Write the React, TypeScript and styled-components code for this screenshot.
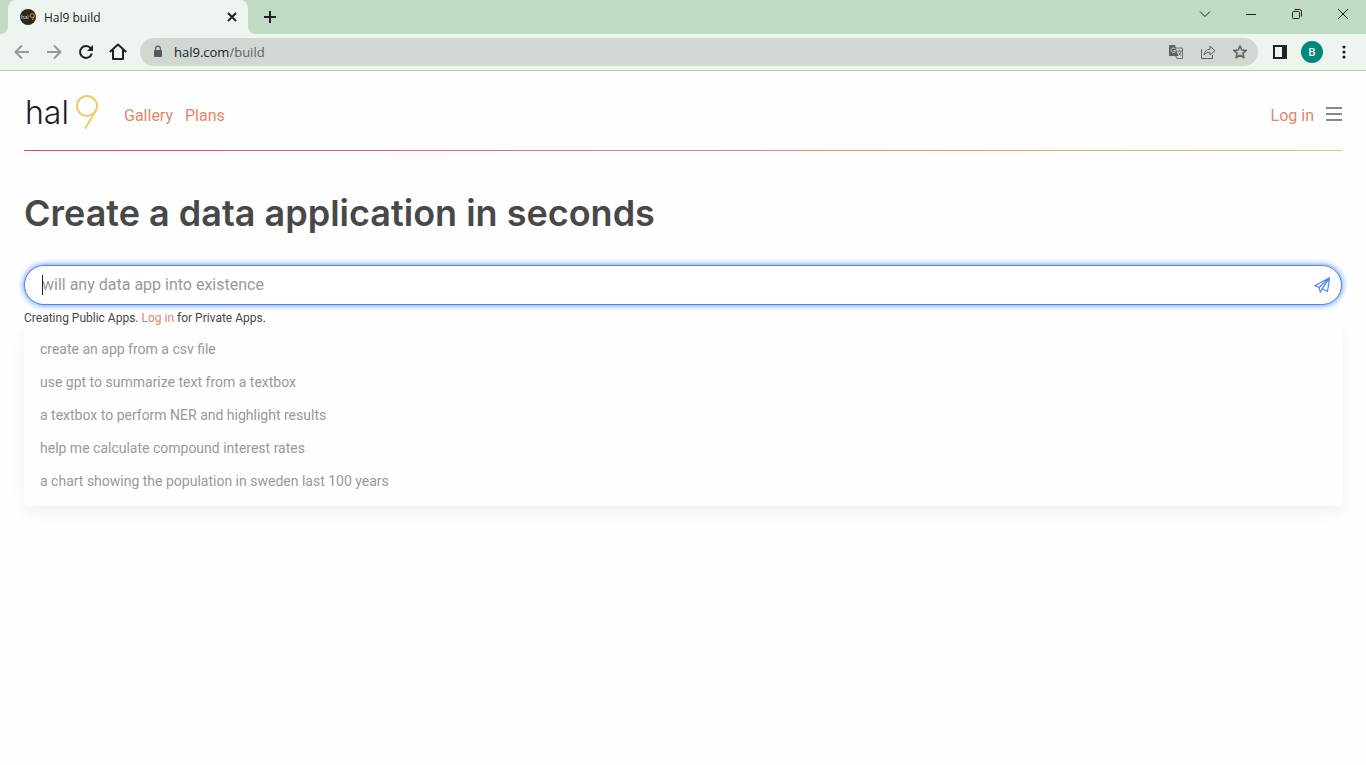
import React from "react";
import styled, { createGlobalStyle } from "styled-components";

const GlobalStyle = createGlobalStyle`
  *, *::before, *::after { box-sizing: border-box; }
  body { margin: 0; background: #fefefe; font-family: Roboto, "Liberation Sans", sans-serif; color: #484848; }
  button { margin: 0; padding: 0; border: 0; background: none; color: inherit; font: inherit; }
  a { color: #e08768; text-decoration: none; }
  svg { display: block; flex: none; }
`;

const Window = styled.div`
  display: flex;
  flex-direction: column;
  min-height: 100vh;
`;

const Browser = styled.div`
  font-family: "Open Sans", "Noto Sans", sans-serif;
  color: #202124;
`;

const TabStrip = styled.div`
  display: flex;
  align-items: stretch;
  height: 34px;
  padding-left: 8px;
  background: #c1dac3;
`;

const Tab = styled.div`
  position: relative;
  display: flex;
  align-items: center;
  gap: 8px;
  width: 240px;
  padding: 0 8px 0 12px;
  border-radius: 8px 8px 0 0;
  background: #edf5ee;
  font-size: 12px;

  &::before, &::after {
    content: "";
    position: absolute;
    bottom: 0;
    width: 8px;
    height: 8px;
  }
  &::before { right: 100%; background: radial-gradient(circle at 0 0, transparent 8px, #edf5ee 8px); }
  &::after { left: 100%; background: radial-gradient(circle at 100% 0, transparent 8px, #edf5ee 8px); }
`;

const TabTitle = styled.span`
  flex: 1;
`;

const IconButton = styled.button<{ $w?: number; $h?: number }>`
  display: flex;
  align-items: center;
  justify-content: center;
  flex: none;
  width: ${(p) => p.$w ?? 32}px;
  height: ${(p) => p.$h ?? 28}px;
`;

const NewTab = styled(IconButton)`
  align-self: center;
  margin-left: 6px;
`;

const WindowControls = styled.div`
  display: flex;
  margin-left: auto;
`;

const Toolbar = styled.div`
  display: flex;
  align-items: center;
  height: 37px;
  padding: 0 6px;
  background: #edf5ee;
  border-bottom: 1px solid #bcc4be;
`;

const AddressBar = styled.div`
  display: flex;
  align-items: center;
  flex: 1;
  height: 28px;
  margin: 0 6px;
  padding: 0 2px 0 12px;
  border-radius: 14px;
  background: #d0d8d1;
  color: #5f6368;
`;

const Address = styled.div`
  flex: 1;
  margin-left: 10px;
  font-size: 13px;
`;

const Host = styled.span`
  color: #202124;
`;

const Avatar = styled.span`
  display: grid;
  place-items: center;
  width: 22px;
  height: 22px;
  border-radius: 50%;
  background: #00897b;
  color: #fff;
  font: 500 11px Roboto, sans-serif;
`;

const Page = styled.div`
  flex: 1;
  padding: 0 24px 24px;
`;

const Header = styled.header`
  display: flex;
  align-items: center;
  height: 80px;
  border-bottom: 1px solid;
  border-image: linear-gradient(90deg, #d8456f, #e6c766) 1;
`;

const Logo = styled.a`
  margin-right: 24px;
`;

const Nav = styled.nav`
  display: flex;
  flex: 1;
  gap: 12px;
  padding-top: 10px;
  font-size: 16px;
  line-height: 20px;
`;

const Account = styled.div`
  display: flex;
  align-items: flex-start;
  gap: 12px;
  padding-top: 10px;
  font-size: 16px;
  line-height: 20px;
`;

const Title = styled.h1`
  margin: 38px 0 28px;
  font: 600 36px/48px Inter, sans-serif;
  color: #484848;
`;

const Prompt = styled.form`
  position: relative;
  display: flex;
  align-items: center;
  height: 40px;
  padding: 0 3px 0 17px;
  border: 1px solid #4c86f7;
  border-radius: 20px;
  background: #fff;
  box-shadow: 0 0 6px #4c86f7;
`;

const PromptInput = styled.input`
  flex: 1;
  min-width: 0;
  padding: 0;
  border: 0;
  outline: 0;
  background: transparent;
  font: 16px/20px Roboto, sans-serif;
  color: #484848;
  caret-color: transparent;
  &::placeholder { color: #999; opacity: 1; }
`;

const Caret = styled.span`
  position: absolute;
  left: 17px;
  width: 1px;
  height: 20px;
  background: #222;
`;

const Note = styled.p`
  margin: 6px 0 0;
  font-size: 12px;
  line-height: 14px;
`;

const Suggestions = styled.ul`
  margin: 0;
  padding: 7px 0 9px;
  list-style: none;
  border-radius: 4px;
  background: #fefefe;
  box-shadow: 0 6px 16px rgba(0, 0, 0, 0.06);
`;

const Suggestion = styled.button`
  display: block;
  width: 100%;
  height: 33px;
  padding: 0 16px;
  text-align: left;
  font-size: 14px;
  color: #999;
`;

const suggestions = [
  "create an app from a csv file",
  "use gpt to summarize text from a textbox",
  "a textbox to perform NER and highlight results",
  "help me calculate compound interest rates",
  "a chart showing the population in sweden last 100 years",
];

const Stroke = ({ d, size = 16, width = 2, color = "currentColor" }: { d: string; size?: number; width?: number; color?: string }) => (
  <svg width={size} height={size} viewBox={`0 0 ${size} ${size}`} fill="none" stroke={color} strokeWidth={width} strokeLinejoin="round" aria-hidden="true">
    <path d={d} />
  </svg>
);

const Favicon = () => (
  <svg width="16" height="16" viewBox="0 0 16 16" aria-hidden="true">
    <circle cx="8" cy="8" r="8" fill="#2b2a22" />
    <text x="1" y="10" fontSize="6" fontFamily="Lato, sans-serif" fill="#ddd">hal</text>
    <circle cx="12.3" cy="6.6" r="2" fill="none" stroke="#c89a3c" />
    <path d="M14 7.8 12.3 11" stroke="#c89a3c" />
  </svg>
);

export default function App() {
  return (
    <Window>
      <GlobalStyle />
      <Browser>
        <TabStrip>
          <Tab>
            <Favicon />
            <TabTitle>Hal9 build</TabTitle>
            <IconButton $w={16} $h={16} aria-label="Close tab">
              <Stroke d="M4 4 12 12M12 4 4 12" />
            </IconButton>
          </Tab>
          <NewTab aria-label="New tab">
            <Stroke d="M8 2V14M2 8H14" />
          </NewTab>
          <WindowControls>
            <IconButton $w={46} aria-label="Search tabs"><Stroke d="M3 5.5 8 10.5 13 5.5" width={1} /></IconButton>
            <IconButton $w={46} aria-label="Minimize"><Stroke d="M3 8.5H13" width={1} /></IconButton>
            <IconButton $w={46} aria-label="Restore">
              <Stroke d="M4.500 5.500H9.500A1 1 0 0 1 10.500 6.500V11.500A1 1 0 0 1 9.500 12.500H4.500A1 1 0 0 1 3.500 11.500V6.500A1 1 0 0 1 4.500 5.500ZM5.500 3.500H10.500A2 2 0 0 1 12.500 5.500V10.500" width={1} />
            </IconButton>
            <IconButton $w={46} aria-label="Close"><Stroke d="M3 3 13 13M13 3 3 13" width={1} /></IconButton>
          </WindowControls>
        </TabStrip>
        <Toolbar>
          <IconButton aria-label="Back"><Stroke d="M15 8H2M8 1.500 1.500 8 8 14.500" color="#949a96" /></IconButton>
          <IconButton aria-label="Forward"><Stroke d="M1 8H14M8 1.500 14.500 8 8 14.500" color="#949a96" /></IconButton>
          <IconButton aria-label="Reload">
            <svg width="16" height="16" viewBox="0 0 16 16" aria-hidden="true">
              <path d="M12.800 4.300A6 6 0 1 0 13.800 9.500" fill="none" stroke="#202124" strokeWidth="2" />
              <path d="M15 1V7H9Z" fill="#202124" />
            </svg>
          </IconButton>
          <IconButton aria-label="Home"><Stroke d="M.8 9 9 1.500 17.200 9M4 7V16H14V7" size={18} /></IconButton>
          <AddressBar>
            <svg width="12" height="14" viewBox="0 0 12 14" aria-hidden="true">
              <rect x="2" y="5" width="8" height="7" rx="1" fill="#55585f" />
              <path d="M3.700 5.500V3.500A2.300 2.300 0 0 1 8.300 3.500V5.500" fill="none" stroke="#55585f" strokeWidth="1.300" />
            </svg>
            <Address><Host>hal9.com</Host>/build</Address>
            <IconButton aria-label="Translate">
              <svg width="16" height="16" viewBox="0 0 16 16" aria-hidden="true">
                <path d="M7 4H14.500V14.500H9L7.500 11.500" fill="none" stroke="#6b706d" />
                <path d="M1.500 1H7L10.300 12H1.500A.8.8 0 0 1 1 11.500V1.500Z" fill="#5f6461" />
                <path d="M7.300 5.200A2.200 2.200 0 1 0 7.500 6.700H5.600" fill="none" stroke="#d0d8d1" />
                <path d="M9.500 7H13.500M11.500 6V7M13 7Q12.500 10 10.500 11.500M10.500 8.500 13 11.500" fill="none" stroke="#6b706d" />
              </svg>
            </IconButton>
            <IconButton aria-label="Share">
              <Stroke d="M1.500 5V14.500H12.500V11M4 11Q4.500 5.500 10 5.300V2L15 6.700 10 11V8.200Q6 8 4 11Z" width={1} />
            </IconButton>
            <IconButton aria-label="Bookmark">
              <Stroke d="M8 1.800 9.700 6 14.300 6.300 10.800 9.200 12 13.800 8 11.200 4 13.800 5.200 9.200 1.700 6.300 6.300 6Z" width={1.5} />
            </IconButton>
          </AddressBar>
          <IconButton aria-label="Side panel">
            <svg width="14" height="14" viewBox="0 0 14 14" aria-hidden="true">
              <path d="M1 1H13V13H1Z" fill="none" stroke="#202124" strokeWidth="2" />
              <path d="M9 1H13V13H9Z" fill="#202124" />
            </svg>
          </IconButton>
          <IconButton aria-label="Profile"><Avatar>B</Avatar></IconButton>
          <IconButton aria-label="Menu">
            <svg width="4" height="14" viewBox="0 0 4 14" fill="#202124" aria-hidden="true">
              <circle cx="2" cy="2" r="1.600" /><circle cx="2" cy="7" r="1.600" /><circle cx="2" cy="12" r="1.600" />
            </svg>
          </IconButton>
        </Toolbar>
      </Browser>
      <Page>
        <Header>
          <Logo href="#" aria-label="hal9">
            <svg width="76" height="44" viewBox="0 0 76 44">
              <text x="1" y="35" fontSize="32" fontWeight="300" fontFamily="Inter, sans-serif" fill="#1d1d1d">hal</text>
              <circle cx="63" cy="17" r="10" fill="none" stroke="#efca6b" strokeWidth="2" />
              <path d="M71.500 22 61.500 39" stroke="#efca6b" strokeWidth="2" strokeLinecap="round" />
            </svg>
          </Logo>
          <Nav>
            <a href="#gallery">Gallery</a>
            <a href="#plans">Plans</a>
          </Nav>
          <Account>
            <a href="#login">Log in</a>
            <IconButton $w={16} $h={16} aria-label="Open menu">
              <Stroke d="M0 2H16M0 8H16M0 14H16" color="#888" />
            </IconButton>
          </Account>
        </Header>
        <main>
          <Title>Create a data application in seconds</Title>
          <Prompt>
            <PromptInput aria-label="Describe your app" placeholder="will any data app into existence" />
            <Caret />
            <IconButton type="button" aria-label="Send">
              <Stroke d="M15.500.8.8 8.800 5 10.500 15.500.8 13.500 14.500 8.300 11.700 15.500.8M5 10.500 6.300 15.200 8.300 11.700" width={1.2} color="#4c86f7" />
            </IconButton>
          </Prompt>
          <Note>
            Creating Public Apps. <a href="#login">Log in</a> for Private Apps.
          </Note>
          <Suggestions>
            {suggestions.map((text) => (
              <li key={text}>
                <Suggestion type="button">{text}</Suggestion>
              </li>
            ))}
          </Suggestions>
        </main>
      </Page>
    </Window>
  );
}
